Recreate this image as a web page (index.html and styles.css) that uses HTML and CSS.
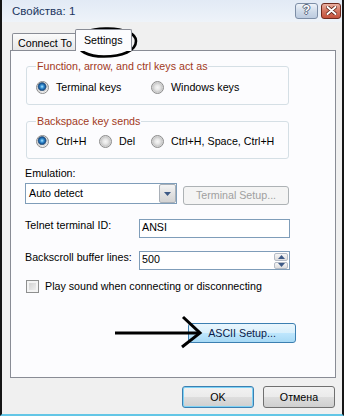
FILE: index.html
```html
<!DOCTYPE html>
<html>
<head>
<meta charset="utf-8">
<link rel="stylesheet" href="styles.css">
</head>
<body>
<div class="window">
  <div class="titlebar">
    <span class="title">Свойства: 1</span>
    <div class="caption-btns">
      <span class="cbtn help">?</span>
      <span class="cbtn close">
        <svg width="11" height="9" viewBox="0 0 11 9">
          <path d="M1.5 1 L9.5 8 M9.5 1 L1.5 8" stroke="#5a1f14" stroke-width="3.6" stroke-linecap="round"/>
          <path d="M1.5 1 L9.5 8 M9.5 1 L1.5 8" stroke="#fff" stroke-width="2" stroke-linecap="round"/>
        </svg>
      </span>
    </div>
  </div>
  <div class="client">
    <div class="tabs">
      <div class="tab">Connect To</div>
      <div class="tab active">Settings</div>
    </div>
    <div class="panel">
      <fieldset class="group g1">
        <legend>Function, arrow, and ctrl keys act as</legend>
        <div class="radios">
          <div class="opt o-wide"><span class="radio checked"></span>Terminal keys</div>
          <div class="opt"><span class="radio"></span>Windows keys</div>
        </div>
      </fieldset>
      <fieldset class="group g2">
        <legend>Backspace key sends</legend>
        <div class="radios">
          <div class="opt o-mid"><span class="radio checked"></span>Ctrl+H</div>
          <div class="opt o-small"><span class="radio"></span>Del</div>
          <div class="opt"><span class="radio"></span>Ctrl+H, Space, Ctrl+H</div>
        </div>
      </fieldset>
      <div class="field-label">Emulation:</div>
      <div class="combo-row">
        <div class="combo">
          <span class="combo-text">Auto detect</span>
          <span class="combo-btn">
            <svg width="7" height="4" viewBox="0 0 7 4"><path d="M0 0 H7 L3.5 4 Z" fill="#3e5a86"/></svg>
          </span>
        </div>
        <div class="btn disabled term-btn">Terminal Setup...</div>
      </div>
      <div class="input-row telnet">
        <span class="row-label">Telnet terminal ID:</span>
        <div class="input">ANSI</div>
      </div>
      <div class="input-row backscroll">
        <span class="row-label">Backscroll buffer lines:</span>
        <div class="input spin">
          <span class="spin-text">500</span>
          <span class="spin-btns">
            <span class="spin-btn"><svg width="7" height="4" viewBox="0 0 7 4"><path d="M0 4 H7 L3.5 0 Z" fill="#3e5a86"/></svg></span>
            <span class="spin-btn"><svg width="7" height="4" viewBox="0 0 7 4"><path d="M0 0 H7 L3.5 4 Z" fill="#3e5a86"/></svg></span>
          </span>
        </div>
      </div>
      <div class="check-row">
        <span class="checkbox"></span>
        <span>Play sound when connecting or disconnecting</span>
      </div>
      <div class="btn hot ascii-btn">ASCII Setup...</div>
    </div>
    <div class="footer">
      <div class="btn default">OK</div>
      <div class="btn">Отмена</div>
    </div>
  </div>
</div>
<svg class="annot" width="345" height="416" viewBox="0 0 345 416">
  <path d="M78 44 C74 33 92 28 108 28.5 C124 29 136 33 136 41 C136 51 122 56.5 104 56.5 C88 56.5 77 51 78 43" fill="none" stroke="#000" stroke-width="2.6"/>
  <path d="M115 333 L199 333" stroke="#000" stroke-width="3"/>
  <path d="M183 317 L200 333 L182 347" fill="none" stroke="#000" stroke-width="3" stroke-linejoin="miter"/>
</svg>
</body>
</html>
```

FILE: styles.css
```css
* { box-sizing: border-box; }

html, body {
  margin: 0;
  padding: 0;
  background: #ffffff;
}

body {
  width: 345px;
  height: 416px;
  overflow: hidden;
  position: relative;
  font-family: "Liberation Sans", Arial, sans-serif;
  font-size: 10.7px;
  line-height: 13px;
  color: #000;
}

.window {
  width: 344px;
  height: 416px;
  border-left: 2px solid #151515;
  border-right: 2px solid #151515;
  border-bottom: 2px solid #63c6e6;
  background: #f0f0f0;
  display: flex;
  flex-direction: column;
}

/* Title bar */
.titlebar {
  height: 22px;
  flex: none;
  display: flex;
  align-items: center;
  justify-content: space-between;
  padding: 0 1px 0 10px;
  background: linear-gradient(#e2eaf5, #eef3f9);
}

.title {
  font-size: 11.5px;
  color: #1c3660;
}

.caption-btns {
  display: flex;
  gap: 3px;
  align-items: center;
  margin-top: -1px;
}

.cbtn {
  height: 16px;
  border-radius: 3px;
  display: flex;
  align-items: center;
  justify-content: center;
}

.help {
  width: 23px;
  border: 1px solid #7d8ea6;
  background: linear-gradient(#eef3f9, #cdd9e8 55%, #bccbdf);
  color: #fff;
  font-weight: bold;
  font-size: 12px;
  text-shadow: 1px 0 0 #55657c, -1px 0 0 #55657c, 0 1px 0 #55657c, 0 -1px 0 #55657c;
}

.close {
  width: 20px;
  border: 1px solid #6f2a1e;
  background: linear-gradient(#eab1a3, #d37560 50%, #c4523c);
}

/* Client area */
.client {
  flex: 1;
  display: flex;
  flex-direction: column;
  padding: 7px 6px 0 8px;
}

.tabs {
  height: 21px;
  display: flex;
  align-items: flex-end;
  padding-left: 2px;
}

.tab {
  height: 17px;
  padding: 3px 5px 0;
  border: 1px solid #898c95;
  border-bottom: none;
  border-radius: 2px 2px 0 0;
  background: linear-gradient(#fbfbfb, #e7e7e7);
  white-space: nowrap;
}

.tab.active {
  height: 22px;
  margin-left: -3px;
  margin-bottom: -1px;
  padding: 4px 8px 0;
  background: #fcfcfe;
  position: relative;
  z-index: 1;
}

.panel {
  border: 1px solid #898c95;
  background: #fcfcfe;
  padding: 0 0 34px 14px;
  display: flex;
  flex-direction: column;
  align-items: flex-start;
}

/* Group boxes */
.group {
  width: 263px;
  margin: 8px 0 0 1px;
  border: 1px solid #d5dfe5;
  border-radius: 3px;
  padding: 0 0 10px 9px;
  min-width: 0;
}

.group.g2 {
  margin-top: 9px;
}

.group legend {
  padding: 0 1px;
  line-height: 14px;
  color: #a1391c;
}

.radios {
  display: flex;
  height: 13px;
  margin-top: 8px;
}

.g2 .radios {
  margin-top: 7px;
}

.opt {
  display: flex;
  align-items: center;
  gap: 7px;
  white-space: nowrap;
}

.o-wide { width: 115px; }
.o-mid { width: 63px; }
.o-small { width: 52px; }

.radio {
  width: 13px;
  height: 13px;
  flex: none;
  border-radius: 50%;
  border: 1px solid #8b8b8b;
  background: radial-gradient(circle at 50% 50%, #f6f6f6 0, #e6e6e6 2.5px, #cbcbcb 4.5px, #dcdcdc 5.5px, #f4f4f4 6px);
}

.radio.checked {
  background: radial-gradient(circle at 46% 42%, #b5e9ff 0, #3d97d9 1.6px, #13508f 3.4px, #5d7590 4.2px, #e9e9e9 4.8px, #d4d4d4 5.6px, #f4f4f4 6px);
}

/* Emulation */
.field-label {
  margin-top: 8px;
}

.combo-row {
  display: flex;
  align-items: flex-start;
  margin-top: 3px;
}

.combo {
  width: 152px;
  height: 21px;
  border: 1px solid #7f9db9;
  background: #fff;
  display: flex;
  align-items: center;
  padding-left: 3px;
}

.combo-text {
  flex: 1;
}

.combo-btn {
  width: 17px;
  height: 19px;
  border: 1px solid #a9b0b8;
  border-radius: 2px;
  background: linear-gradient(#f4f4f4, #e2e2e2 50%, #d3d3d3);
  display: flex;
  align-items: center;
  justify-content: center;
}

.btn {
  height: 22px;
  border: 1px solid #707070;
  border-radius: 3px;
  background: linear-gradient(#f2f2f2, #ebebeb 50%, #dddddd 51%, #cfcfcf);
  display: flex;
  align-items: center;
  justify-content: center;
  white-space: nowrap;
  width: 72px;
}

.btn.disabled {
  border-color: #adb2b5;
  background: #f4f4f4;
  color: #a0a0a0;
}

.term-btn {
  width: 106px;
  height: 19px;
  margin: 3px 0 0 6px;
}

.btn.hot {
  border-color: #3c7fb1;
  background: linear-gradient(#eaf6fd, #d9f0fc 50%, #bee6fd 51%, #a7d9f5);
  color: #0b1c4a;
}

.ascii-btn {
  width: 108px;
  height: 20px;
  margin: 30px 0 0 163px;
}

/* Inputs */
.input-row {
  display: flex;
  align-items: flex-start;
}

.telnet { margin-top: 14px; }
.backscroll { margin-top: 13px; }

.row-label {
  width: 114px;
  flex: none;
}

.input {
  width: 151px;
  height: 19px;
  border: 1px solid #7f9db9;
  background: #fff;
  padding: 1px 0 0 2px;
}

.input.spin {
  display: flex;
  justify-content: space-between;
  padding-right: 1px;
}

.spin-btns {
  display: flex;
  flex-direction: column;
}

.spin-btn {
  width: 14px;
  height: 8px;
  border: 1px solid #b5bcc6;
  border-radius: 2px;
  background: linear-gradient(#f6f6f6, #dedede);
  display: flex;
  align-items: center;
  justify-content: center;
}

.spin-btn + .spin-btn {
  margin-top: 1px;
}

/* Checkbox */
.check-row {
  display: flex;
  align-items: center;
  gap: 6px;
  margin: 10px 0 0 1px;
  height: 13px;
  white-space: nowrap;
}

.checkbox {
  width: 13px;
  height: 13px;
  flex: none;
  border: 1px solid #8e8f8f;
  background: linear-gradient(135deg, #cbcbcb, #f6f6f6);
  box-shadow: inset 0 0 0 2px #f4f4f4;
}

/* Footer */
.footer {
  display: flex;
  justify-content: flex-end;
  gap: 9px;
  margin-top: 8px;
  padding-right: 1px;
}

.btn.default {
  border-color: #3c7fb1;
  box-shadow: inset 0 0 0 1px #7ed2f5;
}

/* Annotations drawn over the screenshot */
.annot {
  position: absolute;
  left: 0;
  top: 0;
  pointer-events: none;
}
```
